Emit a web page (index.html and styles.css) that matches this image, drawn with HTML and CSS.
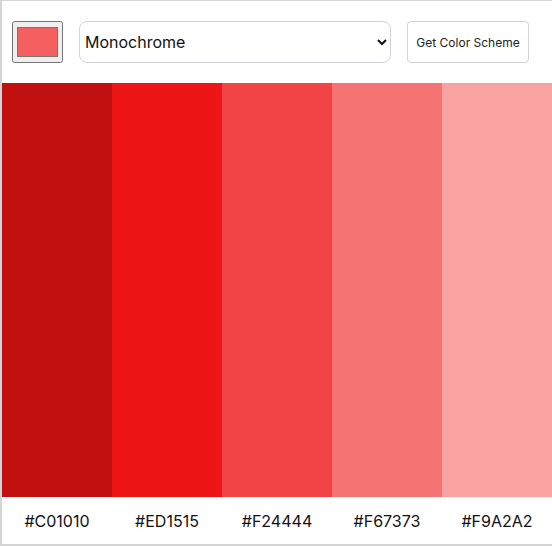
FILE: index.html
```html
<!DOCTYPE html>
<html>
<head>
<meta charset="utf-8">
<link rel="stylesheet" href="styles.css">
</head>
<body>
<div class="app">
  <header class="controls">
    <input class="seed" type="color" value="#f55f5f">
    <select class="mode">
      <option>Monochrome</option>
      <option>Monochrome-dark</option>
      <option>Monochrome-light</option>
      <option>Analogic</option>
      <option>Complement</option>
    </select>
    <button class="get">Get Color Scheme</button>
  </header>
  <main class="scheme">
    <div class="col"><div class="swatch" style="background:#C01010"></div><div class="hex">#C01010</div></div>
    <div class="col"><div class="swatch" style="background:#ED1515"></div><div class="hex">#ED1515</div></div>
    <div class="col"><div class="swatch" style="background:#F24444"></div><div class="hex">#F24444</div></div>
    <div class="col"><div class="swatch" style="background:#F67373"></div><div class="hex">#F67373</div></div>
    <div class="col"><div class="swatch" style="background:#F9A2A2"></div><div class="hex">#F9A2A2</div></div>
  </main>
</div>
</body>
</html>
```
FILE: styles.css
```css
html, body {
  margin: 0;
  padding: 0;
  background: #fff;
}
body {
  font-family: Inter, "Noto Sans", sans-serif;
  color: #111;
}
.app {
  width: 550px;
  height: 543px;
  border-left: 2px solid #d4d4d4;
  border-top: 1px solid #d4d4d4;
  border-bottom: 2px solid #d4d4d4;
  display: flex;
  flex-direction: column;
}
.controls {
  display: flex;
  align-items: center;
  gap: 16px;
  padding: 20px 23px 20px 10px;
  height: 42px;
}
.seed {
  width: 51px;
  height: 42px;
  margin: 0;
  flex: none;
}
.mode {
  flex: 1;
  height: 42px;
  margin: 0;
  border: 1px solid #d2d2da;
  border-radius: 8px;
  background: #fff;
  font-family: Inter, sans-serif;
  font-size: 16px;
  color: #111;
  padding: 0 4px 0 1px;
}
.get {
  flex: none;
  height: 42px;
  width: 122px;
  margin: 0;
  border: 1px solid #d2d2da;
  border-radius: 4px;
  background: #fff;
  font-family: Inter, sans-serif;
  font-size: 12px;
  color: #222;
  padding: 0;
}
.scheme {
  flex: 1;
  display: flex;
}
.col {
  flex: 1;
  display: flex;
  flex-direction: column;
}
.swatch {
  flex: 1;
}
.hex {
  height: 47px;
  display: flex;
  align-items: center;
  justify-content: center;
  font-size: 16px;
}
```
